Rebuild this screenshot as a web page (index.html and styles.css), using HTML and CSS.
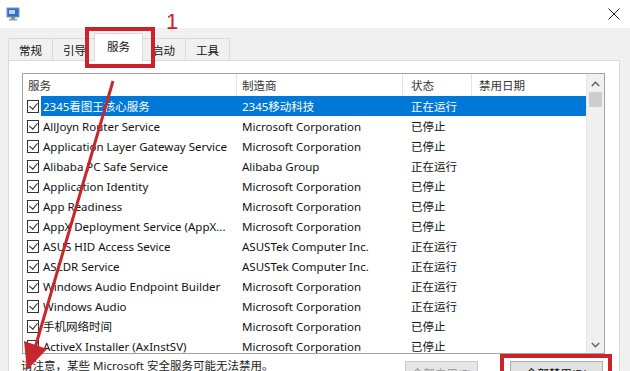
FILE: index.html
```html
<!DOCTYPE html>
<html lang="zh-CN">
<head>
  <meta charset="UTF-8">
  <title>系统配置 - 服务</title>
  <link rel="stylesheet" href="styles.css">
</head>
<body>
  <div class="window">
    <div class="titlebar">
      <svg class="app-icon" width="14" height="14" viewBox="0 0 14 14">
        <rect x="1" y="1" width="12" height="9" fill="#2f6fc4" stroke="#7d9cc4"/>
        <rect x="3" y="3" width="6" height="4" fill="#b9d3f0"/>
        <rect x="5" y="10" width="4" height="2" fill="#8a8a8a"/>
        <rect x="3" y="12" width="8" height="1.5" fill="#9a9a9a"/>
      </svg>
      <svg class="close" width="12" height="12" viewBox="0 0 12 12">
        <path d="M0.5 0.5 L11.5 11.5 M11.5 0.5 L0.5 11.5" stroke="#222" stroke-width="1"/>
      </svg>
    </div>

    <div class="tabstrip">
      <div class="tab">常规</div>
      <div class="tab">引导</div>
      <div class="tab active">服务</div>
      <div class="tab">启动</div>
      <div class="tab">工具</div>
    </div>

    <div class="panel">
      <div class="list">
        <div class="grid">
          <div class="head">
            <div class="hc c1">服务</div>
            <div class="hc c2">制造商</div>
            <div class="hc c3">状态</div>
            <div class="hc c4">禁用日期</div>
          </div>

          <div class="row sel">
            <span class="check"></span>
            <div class="cells"><span class="c1">2345看图王核心服务</span><span class="c2">2345移动科技</span><span class="c3">正在运行</span><span class="c4"></span></div>
          </div>
          <div class="row">
            <span class="check"></span>
            <div class="cells"><span class="c1">AllJoyn Router Service</span><span class="c2">Microsoft Corporation</span><span class="c3">已停止</span><span class="c4"></span></div>
          </div>
          <div class="row">
            <span class="check"></span>
            <div class="cells"><span class="c1">Application Layer Gateway Service</span><span class="c2">Microsoft Corporation</span><span class="c3">已停止</span><span class="c4"></span></div>
          </div>
          <div class="row">
            <span class="check"></span>
            <div class="cells"><span class="c1">Alibaba PC Safe Service</span><span class="c2">Alibaba Group</span><span class="c3">正在运行</span><span class="c4"></span></div>
          </div>
          <div class="row">
            <span class="check"></span>
            <div class="cells"><span class="c1">Application Identity</span><span class="c2">Microsoft Corporation</span><span class="c3">已停止</span><span class="c4"></span></div>
          </div>
          <div class="row">
            <span class="check"></span>
            <div class="cells"><span class="c1">App Readiness</span><span class="c2">Microsoft Corporation</span><span class="c3">已停止</span><span class="c4"></span></div>
          </div>
          <div class="row">
            <span class="check"></span>
            <div class="cells"><span class="c1">AppX Deployment Service (AppX...</span><span class="c2">Microsoft Corporation</span><span class="c3">已停止</span><span class="c4"></span></div>
          </div>
          <div class="row">
            <span class="check"></span>
            <div class="cells"><span class="c1">ASUS HID Access Sevice</span><span class="c2">ASUSTek Computer Inc.</span><span class="c3">正在运行</span><span class="c4"></span></div>
          </div>
          <div class="row">
            <span class="check"></span>
            <div class="cells"><span class="c1">ASLDR Service</span><span class="c2">ASUSTek Computer Inc.</span><span class="c3">正在运行</span><span class="c4"></span></div>
          </div>
          <div class="row">
            <span class="check"></span>
            <div class="cells"><span class="c1">Windows Audio Endpoint Builder</span><span class="c2">Microsoft Corporation</span><span class="c3">正在运行</span><span class="c4"></span></div>
          </div>
          <div class="row">
            <span class="check"></span>
            <div class="cells"><span class="c1">Windows Audio</span><span class="c2">Microsoft Corporation</span><span class="c3">正在运行</span><span class="c4"></span></div>
          </div>
          <div class="row">
            <span class="check"></span>
            <div class="cells"><span class="c1">手机网络时间</span><span class="c2">Microsoft Corporation</span><span class="c3">已停止</span><span class="c4"></span></div>
          </div>
          <div class="row">
            <span class="check"></span>
            <div class="cells"><span class="c1">ActiveX Installer (AxInstSV)</span><span class="c2">Microsoft Corporation</span><span class="c3">已停止</span><span class="c4"></span></div>
          </div>
        </div>

        <div class="scrollbar">
          <div class="sb-btn">
            <svg width="9" height="6" viewBox="0 0 9 6"><path d="M0.8 5 L4.5 1.2 L8.2 5" fill="none" stroke="#606060" stroke-width="1.4"/></svg>
          </div>
          <div class="sb-thumb"></div>
          <div class="sb-track"></div>
          <div class="sb-btn">
            <svg width="9" height="6" viewBox="0 0 9 6"><path d="M0.8 1 L4.5 4.8 L8.2 1" fill="none" stroke="#606060" stroke-width="1.4"/></svg>
          </div>
        </div>
      </div>

      <div class="footer">
        <span class="note">请注意，某些 Microsoft 安全服务可能无法禁用。</span>
        <button class="btn btn-enable" disabled>全部启用(E)</button>
        <button class="btn btn-disable">全部禁用(D)</button>
      </div>
    </div>

    <!-- 标注 -->
    <div class="mark mark-tab"></div>
    <div class="mark-num">1</div>
    <div class="mark mark-btn"></div>
    <svg class="arrow" width="630" height="371" viewBox="0 0 630 371">
      <line x1="113" y1="81" x2="35" y2="348" stroke="#c8262d" stroke-width="3"/>
      <polygon points="27,370 24,341 47,349" fill="#c8262d"/>
    </svg>
  </div>
</body>
</html>
```

FILE: styles.css
```css
body {
  margin: 0;
  font-family: "Noto Sans", "Noto Sans CJK SC", sans-serif;
  font-size: 11.5px;
  color: #111;
}
.window {
  position: relative;
  width: 630px;
  height: 371px;
  overflow: hidden;
  background: #f0f0f0;
}
.titlebar {
  height: 28px;
  background: #fff;
  display: flex;
  align-items: center;
  justify-content: space-between;
  padding: 0 10px 0 6px;
}
.app-icon {
  margin-top: -1px;
}
.close {
  margin-top: -1px;
}

.tabstrip {
  display: flex;
  align-items: flex-end;
  height: 32px;
  padding-left: 8px;
  position: relative;
  z-index: 1;
}
.tab {
  height: 22px;
  box-sizing: border-box;
  padding: 0 10px;
  border: 1px solid #d9d9d9;
  border-bottom: none;
  margin-right: -1px;
  display: flex;
  align-items: center;
  background: #f0f0f0;
}
.tab.active {
  height: 28px;
  margin: 0 -2px -1px -2px;
  padding: 0 12px;
  background: #fff;
  position: relative;
  z-index: 1;
  align-items: flex-start;
  padding-top: 4px;
}

.panel {
  margin: 0 10px 0 8px;
  height: 330px;
  background: #fff;
  border: 1px solid #d9d9d9;
  padding: 12px 14px 0 13px;
}
.list {
  display: flex;
  height: 281px;
  box-sizing: border-box;
  border: 1px solid #a3a3a3;
  overflow: hidden;
}
.grid {
  flex: 1;
  overflow: hidden;
}
.head {
  display: grid;
  grid-template-columns: 214px 166px 69px 115px;
  height: 22px;
  color: #333;
}
.hc {
  display: flex;
  align-items: center;
  border-right: 1px solid #e5e5e5;
}
.head .c1 { padding-left: 5px; }
.head .c2 { padding-left: 5px; }
.head .c3 { padding-left: 8px; }
.head .c4 { padding-left: 7px; border-right: none; }

.row {
  display: flex;
  height: 20px;
  align-items: center;
}
.check {
  width: 13px;
  height: 13px;
  box-sizing: border-box;
  margin: 0 2px 0 4px;
  border: 1px solid #333;
  position: relative;
}
.check::after {
  content: "";
  position: absolute;
  left: 3px;
  top: 0px;
  width: 4px;
  height: 7px;
  border: solid #222;
  border-width: 0 1.3px 1.3px 0;
  transform: rotate(40deg);
}
.cells {
  display: grid;
  grid-template-columns: 195px 166px 69px 115px;
  height: 20px;
  align-items: center;
  white-space: nowrap;
}
.cells span {
  overflow: hidden;
}
.cells .c1 { padding-left: 2px; }
.cells .c2 { padding-left: 6px; }
.cells .c3 { padding-left: 9px; }
.cells .c4 { padding-left: 8px; }
.row.sel .cells {
  background: #0078d7;
  color: #fff;
}

.scrollbar {
  width: 17px;
  display: flex;
  flex-direction: column;
  background: #f0f0f0;
  border-left: 1px solid #e6e6e6;
}
.sb-btn {
  height: 17px;
  display: flex;
  align-items: center;
  justify-content: center;
  padding-top: 1px;
}
.sb-thumb {
  height: 15px;
  margin: 0 2px;
  background: #cdcdcd;
}
.sb-track {
  flex: 1;
}

.footer {
  display: flex;
  align-items: flex-start;
  margin-top: 5px;
}
.note {
  margin-left: -1px;
  line-height: 14px;
  color: #222;
}
.btn {
  font-family: inherit;
  font-size: 11.5px;
  height: 24px;
  margin-top: 2px;
  background: #e1e1e1;
  border: 1px solid #adadad;
  padding: 0;
}
.btn-enable {
  width: 73px;
  margin-left: auto;
  color: #9a9a9a;
  border-color: #c8c8c8;
  background: #e6e6e6;
}
.btn-disable {
  width: 93px;
  margin-left: 32px;
  margin-right: 2px;
  color: #111;
}

.mark {
  position: absolute;
  border: 4px solid #cf2129;
  box-sizing: border-box;
}
.mark-tab {
  left: 85px;
  top: 27px;
  width: 70px;
  height: 41px;
  z-index: 2;
}
.mark-btn {
  left: 500px;
  top: 354px;
  width: 112px;
  height: 30px;
}
.mark-num {
  position: absolute;
  left: 166px;
  top: 9px;
  font-family: "Liberation Sans", sans-serif;
  font-size: 22px;
  color: #cf2129;
}
.arrow {
  position: absolute;
  left: 0;
  top: 0;
  pointer-events: none;
  z-index: 3;
}
```
